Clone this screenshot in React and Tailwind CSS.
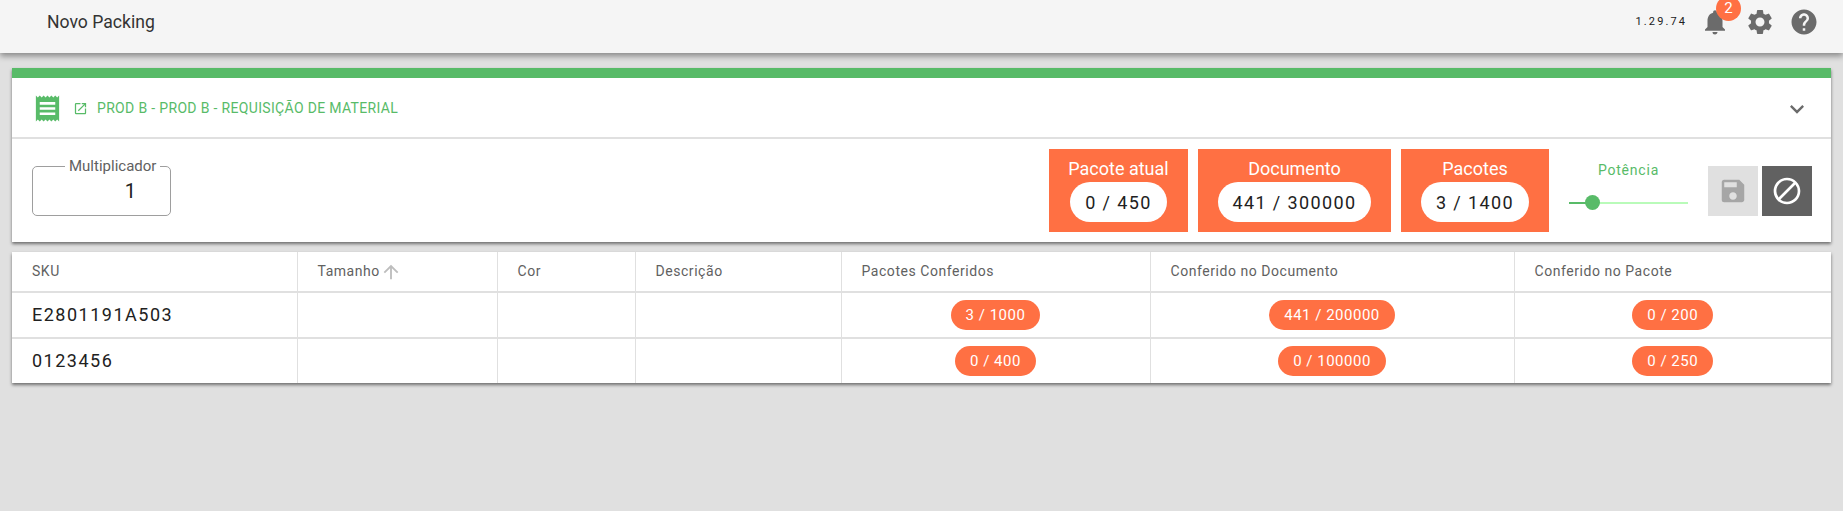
import React from "react";
import {
  MdNotifications, MdSettings, MdHelp, MdOpenInNew, MdReceipt,
  MdKeyboardArrowDown, MdSave, MdBlock, MdArrowUpward,
} from "react-icons/md";

const font = { fontFamily: "Roboto, 'Liberation Sans', sans-serif" };

function Stat({ title, value, w, pill }) {
  return (
    <div className={`flex flex-col items-center bg-[#ff7043] h-[83px] pt-[7px] ${w}`}>
      <div className="text-[18px] leading-[25px] text-white">{title}</div>
      <div className={`mt-[1px] h-[40px] rounded-[20px] bg-white flex items-center justify-center text-[18px] tracking-[1.4px] text-[#212121] ${pill}`}>
        {value}
      </div>
    </div>
  );
}

function Badge({ children }) {
  return (
    <span className="inline-flex items-center h-[30px] px-[15px] rounded-[15px] bg-[#ff7043] text-white text-[15px] tracking-[0.5px] whitespace-nowrap">
      {children}
    </span>
  );
}

const th = "h-[40px] border-r border-b-2 border-[#e0e0e0] pl-[20px] text-left font-normal text-[14px] text-[#616161] tracking-[0.55px]";
const td = "border-r border-[#e0e0e0]";
const rows = [
  { sku: "E2801191A503", a: "3 / 1000", b: "441 / 200000", c: "0 / 200", h: "h-[46px]" },
  { sku: "0123456", a: "0 / 400", b: "0 / 100000", c: "0 / 250", h: "h-[45px]" },
];

export default function App() {
  return (
    <div className="min-h-screen bg-[#e0e0e0]" style={font}>
      <header className="h-[53px] bg-[#f5f5f5] flex items-center pl-[47px] pr-[24px] pb-[9px] shadow-[0_3px_6px_rgba(0,0,0,0.4)]">
        <div className="text-[17.6px] text-[#333333]">Novo Packing</div>
        <div className="ml-auto flex items-center">
          <span className="text-[11px] tracking-[2.1px] text-[#212121] mr-[13px]">1.29.74</span>
          <span className="relative w-[30px] h-[30px] text-[#6b6b6b] flex items-center justify-center">
            <MdNotifications size={30} />
            <span className="absolute -top-[11px] left-[16px] w-[25px] h-[25px] rounded-full bg-[#ff7043] text-white text-[15px] flex items-center justify-center">2</span>
          </span>
          <MdSettings size={30} className="text-[#6b6b6b] ml-[15px]" />
          <MdHelp size={30} className="text-[#6b6b6b] ml-[14px]" />
        </div>
      </header>

      <main className="px-[12px] pt-[15px]">
        <section className="bg-white border-t-[10px] border-[#58bb68] shadow-[0_2px_3px_rgba(0,0,0,0.5)]">
          <div className="h-[61px] border-b-2 border-[#e0e0e0] flex items-center pl-[20px] pr-[20px] pt-[2px] text-[#58bb68]">
            <MdReceipt size={31} />
            <MdOpenInNew size={15} className="ml-[10px]" />
            <span className="ml-[9px] text-[14px] tracking-[0.33px] uppercase">PROD B - PROD B - REQUISIÇÃO DE MATERIAL</span>
            <MdKeyboardArrowDown size={28} className="ml-auto text-[#6b6b6b]" />
          </div>
          <div className="h-[103px] flex items-center pl-[20px] pr-[19px]">
            <fieldset className="w-[139px] min-w-0 h-[57px] -mt-[7px] border border-[#9e9e9e] rounded-[5px] text-right">
              <legend className="ml-[32px] px-[4px] text-[15px] leading-[15px] text-left text-[#616161] whitespace-nowrap">Multiplicador</legend>
              <div className="text-[20px] leading-[34px] pr-[34px] text-[#212121]">1</div>
            </fieldset>
            <div className="ml-auto flex items-center gap-[10px]">
              <Stat title="Pacote atual" value="0 / 450" w="w-[139px]" pill="w-[97px]" />
              <Stat title="Documento" value="441 / 300000" w="w-[193px]" pill="w-[153px]" />
              <Stat title="Pacotes" value="3 / 1400" w="w-[148px]" pill="w-[108px]" />
            </div>
            <div className="ml-[20px] w-[119px] flex flex-col items-center -mt-[12px]">
              <div className="text-[14px] tracking-[0.8px] text-[#58bb68]">Potência</div>
              <div className="relative w-full h-[2px] mt-[21px] mb-[6px] bg-[#b9fbb9]">
                <div className="h-full w-[23px] bg-[#58bb68]" />
                <div className="absolute left-[16px] -top-[7px] w-[15px] h-[15px] rounded-full bg-[#58bb68]" />
              </div>
            </div>
            <div className="ml-[20px] flex gap-[4px]">
              <button className="w-[50px] h-[50px] bg-[#e0e0e0] flex items-center justify-center">
                <MdSave size={30} className="text-[#a6a6a6]" />
              </button>
              <button className="w-[50px] h-[50px] bg-[#616161] flex items-center justify-center">
                <MdBlock size={32} className="text-white" />
              </button>
            </div>
          </div>
        </section>

        <section className="mt-[10px] bg-white shadow-[0_2px_3px_rgba(0,0,0,0.5)]">
          <table className="w-full table-fixed border-collapse">
            <colgroup>
              <col className="w-[285px]" />
              <col className="w-[200px]" />
              <col className="w-[138px]" />
              <col className="w-[206px]" />
              <col className="w-[309px]" />
              <col className="w-[364px]" />
              <col />
            </colgroup>
            <thead>
              <tr>
                <th className={th}>SKU</th>
                <th className={th}>
                  <span className="inline-flex items-center">Tamanho<MdArrowUpward size={22} className="text-[#bdbdbd]" /></span>
                </th>
                <th className={th}>Cor</th>
                <th className={th}>Descrição</th>
                <th className={th}>Pacotes Conferidos</th>
                <th className={th}>Conferido no Documento</th>
                <th className={`${th} border-r-0`}>Conferido no Pacote</th>
              </tr>
            </thead>
            <tbody>
              {rows.map((r, i) => (
                <tr key={r.sku} className={`${r.h} ${i === 0 ? "border-b-2 border-[#e0e0e0]" : ""}`}>
                  <td className={`${td} pl-[20px] pb-[2px] text-[18px] tracking-[1.5px] text-[#212121]`}>{r.sku}</td>
                  <td className={td} />
                  <td className={td} />
                  <td className={td} />
                  <td className={`${td} text-center`}><Badge>{r.a}</Badge></td>
                  <td className={`${td} text-center`}><Badge>{r.b}</Badge></td>
                  <td className="text-center"><Badge>{r.c}</Badge></td>
                </tr>
              ))}
            </tbody>
          </table>
        </section>
      </main>
    </div>
  );
}
